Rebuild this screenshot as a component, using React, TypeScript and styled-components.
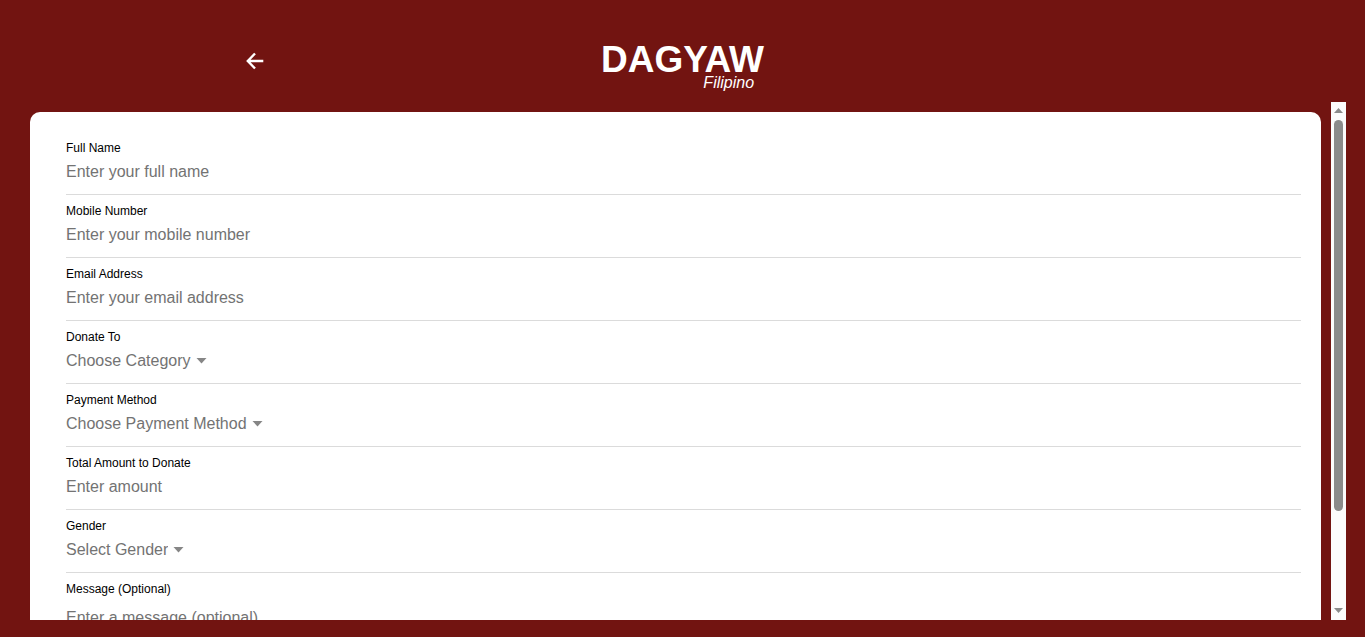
import React, { useCallback, useEffect, useRef, useState } from 'react';
import styled, { createGlobalStyle, css } from 'styled-components';

const GlobalStyle = createGlobalStyle`
  *, *::before, *::after {
    box-sizing: border-box;
  }
  body {
    margin: 0;
    background: #721411;
    font-family: "Liberation Sans", Arial, sans-serif;
  }
`;

const Page = styled.div`
  display: flex;
  flex-direction: column;
  height: 100vh;
  padding-bottom: 17px;
  overflow: hidden;
  background: #721411;
`;

const Header = styled.header`
  display: grid;
  grid-template-columns: 3fr 2fr 3fr;
  align-items: center;
  justify-items: center;
  padding: 40px 0 10px;
  color: #fff;
`;

const BackButton = styled.button`
  display: flex;
  margin: 0 2px 10px 0;
  padding: 0;
  border: 0;
  background: none;
  color: inherit;
  cursor: pointer;
`;

const Brand = styled.div`
  display: flex;
  flex-direction: column;
`;

const Title = styled.h1`
  margin: 0;
  font-size: 37px;
  line-height: 40px;
`;

const Tagline = styled.span`
  margin-top: -6px;
  padding-right: 10px;
  font-size: 16px;
  font-style: italic;
  line-height: 18px;
  text-align: right;
`;

const Body = styled.main`
  display: flex;
  flex: 1;
  min-height: 0;
  margin: 0 19px 0 20px;
`;

const ScrollArea = styled.div`
  flex: 1;
  padding: 10px;
  overflow-y: auto;
  scrollbar-width: none;
`;

const Card = styled.form`
  padding: 20px 20px 20px 36px;
  border-radius: 10px;
  background: #fff;
`;

const Field = styled.div`
  display: flex;
  flex-direction: column;
  padding-top: 8px;
  border-bottom: 1px solid #dbdbdb;
`;

const Label = styled.label`
  color: #000;
  font-size: 12px;
  line-height: 16px;
`;

const controlStyle = css`
  margin: 0;
  padding: 0;
  border: 0;
  outline: 0;
  background: transparent;
  color: #737373;
  font-family: inherit;
  font-size: 16px;
`;

const Input = styled.input`
  ${controlStyle}
  height: 38px;
  padding-bottom: 6px;
  &::placeholder {
    color: #737373;
  }
`;

const SelectRow = styled.div`
  display: flex;
  align-items: center;
  gap: 5px;
  height: 38px;
  padding-bottom: 8px;
`;

const Select = styled.select`
  ${controlStyle}
  appearance: none;
  field-sizing: content;
  height: 30px;
`;

const TextArea = styled.textarea`
  ${controlStyle}
  height: 112px;
  padding-top: 12px;
  line-height: 18px;
  resize: none;
  &::placeholder {
    color: #737373;
  }
`;

const Track = styled.div`
  display: flex;
  flex-direction: column;
  align-items: center;
  width: 15px;
  background: #fcfcfc;
`;

const ArrowButton = styled.button`
  display: flex;
  align-items: center;
  justify-content: center;
  width: 15px;
  height: 18px;
  padding: 0 0 2px;
  border: 0;
  background: none;
`;

const Rail = styled.div`
  flex: 1;
  width: 9px;
`;

const Thumb = styled.div`
  border-radius: 5px;
  background: #8b8b8b;
`;

function Caret() {
  return (
    <svg width="11" height="8" viewBox="0 0 11 8" aria-hidden="true">
      <path d="M0.5 2h10L5.5 7.5z" fill="#868686" />
    </svg>
  );
}

function ScrollBar({ area }: { area: React.RefObject<HTMLDivElement | null> }) {
  const [thumb, setThumb] = useState({ size: 80, offset: 0 });

  const update = useCallback(() => {
    const el = area.current;
    if (!el) return;
    setThumb({
      size: (el.clientHeight / el.scrollHeight) * 100,
      offset: el.scrollTop / el.scrollHeight,
    });
  }, [area]);

  useEffect(() => {
    const el = area.current;
    update();
    el?.addEventListener('scroll', update);
    window.addEventListener('resize', update);
    return () => {
      el?.removeEventListener('scroll', update);
      window.removeEventListener('resize', update);
    };
  }, [area, update]);

  const step = (top: number) => area.current?.scrollBy({ top });

  return (
    <Track>
      <ArrowButton type="button" aria-label="Scroll up" onClick={() => step(-40)}>
        <svg width="9" height="5" viewBox="0 0 9 5">
          <path d="M0 5h9L4.5 0z" fill="#8b8b8b" />
        </svg>
      </ArrowButton>
      <Rail>
        <Thumb
          style={{
            height: `${thumb.size}%`,
            transform: `translateY(${(thumb.offset / thumb.size) * 10000}%)`,
          }}
        />
      </Rail>
      <ArrowButton type="button" aria-label="Scroll down" onClick={() => step(40)}>
        <svg width="9" height="5" viewBox="0 0 9 5">
          <path d="M0 0h9L4.5 5z" fill="#8b8b8b" />
        </svg>
      </ArrowButton>
    </Track>
  );
}

type FieldSpec = {
  id: string;
  label: string;
  hint: string;
  kind: 'text' | 'tel' | 'email' | 'select' | 'textarea';
};

const fields: FieldSpec[] = [
  { id: 'name', label: 'Full Name', hint: 'Enter your full name', kind: 'text' },
  { id: 'mobile', label: 'Mobile Number', hint: 'Enter your mobile number', kind: 'tel' },
  { id: 'email', label: 'Email Address', hint: 'Enter your email address', kind: 'email' },
  { id: 'category', label: 'Donate To', hint: 'Choose Category', kind: 'select' },
  { id: 'payment', label: 'Payment Method', hint: 'Choose Payment Method', kind: 'select' },
  { id: 'amount', label: 'Total Amount to Donate', hint: 'Enter amount', kind: 'text' },
  { id: 'gender', label: 'Gender', hint: 'Select Gender', kind: 'select' },
  { id: 'message', label: 'Message (Optional)', hint: 'Enter a message (optional)', kind: 'textarea' },
];

function Control({ id, hint, kind }: FieldSpec) {
  if (kind === 'select') {
    return (
      <SelectRow>
        <Select id={id} defaultValue="">
          <option value="">{hint}</option>
        </Select>
        <Caret />
      </SelectRow>
    );
  }
  if (kind === 'textarea') return <TextArea id={id} placeholder={hint} />;
  return <Input id={id} type={kind} placeholder={hint} />;
}

export default function App() {
  const area = useRef<HTMLDivElement>(null);
  return (
    <>
      <GlobalStyle />
      <Page>
        <Header>
          <BackButton type="button" aria-label="Back">
            <svg width="18" height="18" viewBox="0 0 18 18" fill="none" stroke="#fff" strokeWidth="2.4">
              <path d="M9 1.5L1.8 9L9 16.5M1.8 9H17.3" />
            </svg>
          </BackButton>
          <Brand>
            <Title>DAGYAW</Title>
            <Tagline>Filipino</Tagline>
          </Brand>
        </Header>
        <Body>
          <ScrollArea ref={area}>
            <Card>
              {fields.map((field) => (
                <Field key={field.id}>
                  <Label htmlFor={field.id}>{field.label}</Label>
                  <Control {...field} />
                </Field>
              ))}
            </Card>
          </ScrollArea>
          <ScrollBar area={area} />
        </Body>
      </Page>
    </>
  );
}
